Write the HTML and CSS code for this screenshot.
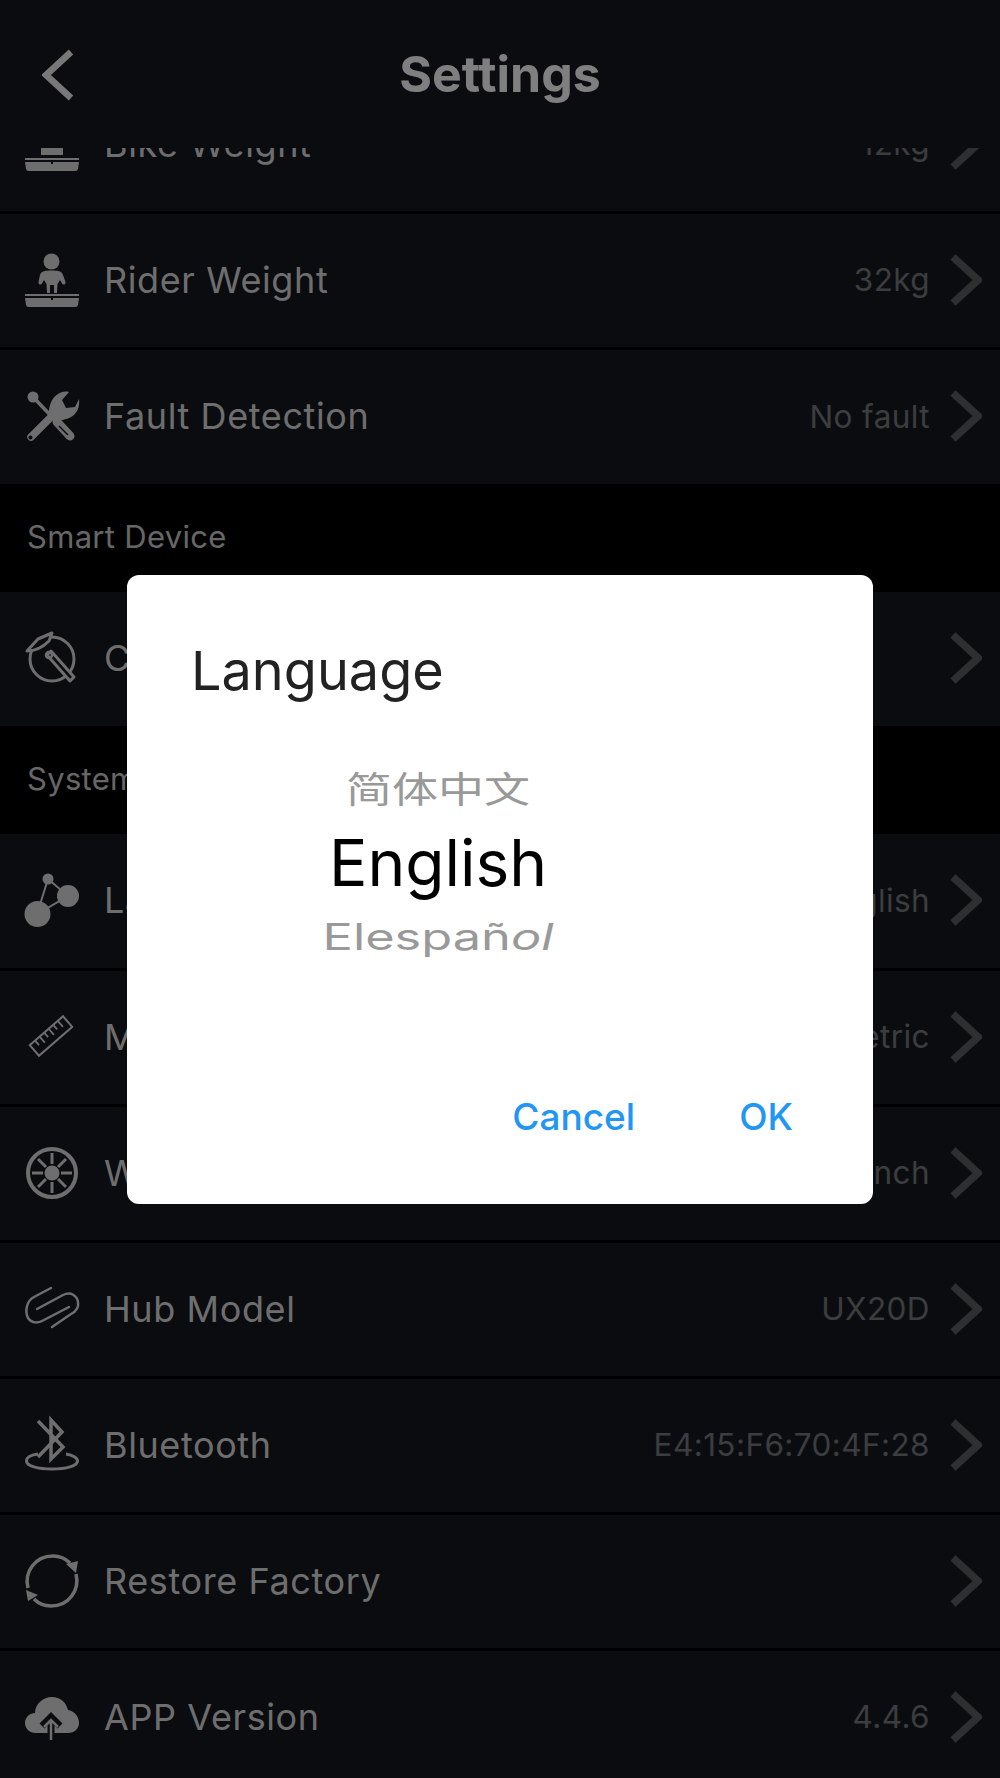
FILE: index.html
```html
<!DOCTYPE html>
<html lang="en">
<head>
  <meta charset="UTF-8">
  <meta name="viewport" content="width=device-width, initial-scale=1.0">
  <title>Settings</title>
  <link rel="stylesheet" href="styles.css">
</head>
<body>
  <div class="page">
    <header class="topbar">
      <svg class="back" viewBox="0 0 32 52"><path d="M29 3 L4 26 L29 49"/></svg>
      <h1>Settings</h1>
    </header>

    <div class="list">
      <div class="row">
        <svg class="ico" viewBox="0 0 54 54"><path class="fill" d="M16 20h22v18H16z"/><rect class="fill" x="0" y="41" width="54" height="2"/><path class="fill" d="M0 45h26v2h2v-2h26l-1 7q-.3 2-3 2H4q-2.700 0-3-2z"/></svg>
        <span class="label">Bike Weight</span>
        <span class="value">12kg</span>
        <svg class="arrow" viewBox="0 0 32 52"><path d="M3 3 L28 26 L3 49"/></svg>
      </div>
      <div class="row">
        <svg class="ico" viewBox="0 0 54 54"><circle class="fill" cx="26.500" cy="8.500" r="8"/><path class="fill" d="M15 22c1-4 6-4.500 11.500-4.500S37 18 38 22l2.500 7c.6 2.500-2.400 3.500-3.500 1.500L35 27l-2.500 4-.5 9h-3v-8h-4v8h-3l-.5-9L19 27l-2 3.500C15.900 32.500 12.900 31.500 13.500 29z"/><rect class="fill" x="0" y="41" width="54" height="2"/><path class="fill" d="M0 45h26v2h2v-2h26l-1 7q-.3 2-3 2H4q-2.700 0-3-2z"/></svg>
        <span class="label">Rider Weight</span>
        <span class="value">32kg</span>
        <svg class="arrow" viewBox="0 0 32 52"><path d="M3 3 L28 26 L3 49"/></svg>
      </div>
      <div class="row">
        <svg class="ico" viewBox="0 0 54 54"><path class="line" stroke-width="3.500" d="M9 9 L30 31"/><circle class="fill" cx="8" cy="8" r="5.500"/><path class="line" stroke-width="9" stroke-linecap="round" d="M32 33 L45 47"/><path class="gap" stroke-width="1.500" d="M34 37 L43 46"/><path class="line" stroke-width="7.500" stroke-linecap="round" d="M6 48 L28 26"/><path class="fill" d="M24 27 C23 19 26 9 33 5 C36 3 40 2 44 3 L37 11 L41 19 L50 18 L54 10 C55 18 52 25 46 28 C41 31 35 31 30 33z"/><circle class="gap" cx="5.500" cy="48.500" r="2"/></svg>
        <span class="label">Fault Detection</span>
        <span class="value">No fault</span>
        <svg class="arrow" viewBox="0 0 32 52"><path d="M3 3 L28 26 L3 49"/></svg>
      </div>

      <div class="section">Smart Device</div>
      <div class="row">
        <svg class="ico" viewBox="0 0 54 54"><circle class="line" stroke-width="3" cx="27" cy="28" r="22"/><path class="blank" stroke-width="3" stroke-linejoin="round" d="M2 20 L13 8 L27 2 L24 10 C18 16 10 20 2 20z"/><path class="blank" stroke-width="3" stroke-linejoin="round" d="M22 24 L26 20 L49 46 L45 50z"/><circle class="line" stroke-width="2.500" cx="24" cy="24" r="3"/></svg>
        <span class="label">CSC</span>
        <span class="value"></span>
        <svg class="arrow" viewBox="0 0 32 52"><path d="M3 3 L28 26 L3 49"/></svg>
      </div>

      <div class="section">System Setting</div>
      <div class="row">
        <svg class="ico" viewBox="0 0 54 54"><path class="line" stroke-width="2" d="M23 6 L12 41 L43 23z"/><circle class="fill" cx="12.500" cy="41" r="13"/><circle class="fill" cx="43" cy="23" r="11"/><circle class="fill" cx="23" cy="6" r="5.500"/></svg>
        <span class="label">Language</span>
        <span class="value">English</span>
        <svg class="arrow" viewBox="0 0 32 52"><path d="M3 3 L28 26 L3 49"/></svg>
      </div>
      <div class="row">
        <svg class="ico" viewBox="0 0 54 54"><g transform="rotate(-41 26 26)"><rect class="line" stroke-width="2" x="4" y="19" width="44" height="14"/><path class="line" stroke-width="1.800" d="M11 19v6M17 19v8M23 19v6M29 19v8M35 19v6M41 19v8"/></g></svg>
        <span class="label">Metric Unit</span>
        <span class="value">Metric</span>
        <svg class="arrow" viewBox="0 0 32 52"><path d="M3 3 L28 26 L3 49"/></svg>
      </div>
      <div class="row">
        <svg class="ico" viewBox="0 0 54 54"><circle class="line" stroke-width="4" cx="27" cy="27" r="24"/><circle class="fill" cx="27" cy="27" r="7.500"/><path class="line" stroke-width="3" d="M27 7v11M27 36v11M7 27h11M36 27h11M13 13l8 8M33 33l8 8M41 13l-8 8M21 33l-8 8"/></svg>
        <span class="label">Wheel Size</span>
        <span class="value">20 inch</span>
        <svg class="arrow" viewBox="0 0 32 52"><path d="M3 3 L28 26 L3 49"/></svg>
      </div>
      <div class="row">
        <svg class="ico" viewBox="0 0 54 54"><path class="line" stroke-width="2.500" stroke-linecap="round" d="M26 6 L9 15 C1 19 0 30 3 36 C7 42 14 41 19 38 L44 25"/><path class="line" stroke-width="2.500" stroke-linecap="round" d="M12 27 L38 13 C46 9 52 14 53 20 C54 26 50 30 46 32 L27 45"/></svg>
        <span class="label">Hub Model</span>
        <span class="value">UX20D</span>
        <svg class="arrow" viewBox="0 0 32 52"><path d="M3 3 L28 26 L3 49"/></svg>
      </div>
      <div class="row">
        <svg class="ico" viewBox="0 0 54 54"><path class="line" stroke-width="3" d="M13 36 C5 37 1.500 40 1.500 43 C1.500 48 13 51 27 51 C41 51 52.500 48 52.500 43 C52.500 40 48 37 41 36"/><path class="line" stroke-width="3.500" d="M13 3 L38 29 L26 41 V2 L37 14 L13 39"/></svg>
        <span class="label">Bluetooth</span>
        <span class="value">E4:15:F6:70:4F:28</span>
        <svg class="arrow" viewBox="0 0 32 52"><path d="M3 3 L28 26 L3 49"/></svg>
      </div>
      <div class="row">
        <svg class="ico" viewBox="0 0 54 54"><path class="line" stroke-width="3.500" d="M3 34 C-1 18 10 2 28 2 C35 2 41 5 45 9"/><path class="fill" d="M41 10 L53 7 L51 19z"/><path class="line" stroke-width="3.500" d="M51 20 C55 36 44 52 26 52 C19 52 13 49 9 45"/><path class="fill" d="M1 36 L13 41 L3 47z"/></svg>
        <span class="label">Restore Factory</span>
        <span class="value"></span>
        <svg class="arrow" viewBox="0 0 32 52"><path d="M3 3 L28 26 L3 49"/></svg>
      </div>
      <div class="row">
        <svg class="ico" viewBox="0 0 54 54"><path class="fill" d="M11 43 C4 43 0 38 0 33 C0 27 5 23 10 23 C10 14 18 7 27 7 C35 7 41 12 43 20 C49 21 54 26 54 33 C54 39 49 43 43 43z"/><path class="halo" stroke-width="7" d="M26 50 V28 M17 36 L26 27 L35 36"/><path class="line" stroke-width="2.500" d="M26 50 V30 M19 37 L26 30 L33 37"/></svg>
        <span class="label">APP Version</span>
        <span class="value">4.4.6</span>
        <svg class="arrow" viewBox="0 0 32 52"><path d="M3 3 L28 26 L3 49"/></svg>
      </div>
    </div>
  </div>

  <!-- Language picker -->
  <div class="overlay">
    <div class="dialog">
      <h2>Language</h2>
      <div class="wheel">
        <div class="opt opt-top">简体中文</div>
        <div class="opt opt-mid">English</div>
        <div class="opt opt-low">Elespañ<i>ol</i></div>
      </div>
      <div class="actions">
        <span class="btn">Cancel</span>
        <span class="btn">OK</span>
      </div>
    </div>
  </div>
</body>
</html>
```

FILE: styles.css
```css
html, body {
  margin: 0;
  height: 100%;
  overflow: hidden;
}

body {
  font-family: Inter, "Noto Sans CJK SC", sans-serif;
  background-color: #000;
}

.page {
  display: flex;
  flex-direction: column;
  height: 100%;
  overflow: hidden;
}

/* Top bar */
.topbar {
  position: relative;
  z-index: 2;
  flex: none;
  height: 148px;
  display: flex;
  align-items: center;
  justify-content: center;
  background-color: #161920;
}

.topbar h1 {
  margin: 0;
  font-size: 50px;
  font-weight: 700;
  color: #fff;
}

.back {
  position: absolute;
  left: 42px;
  top: 49px;
  width: 32px;
  height: 52px;
  fill: none;
  stroke: #f0f0f0;
  stroke-width: 6.500;
}

/* Rows */
.list {
  flex: none;
  margin-top: -70px;
}

.row {
  box-sizing: border-box;
  height: 136px;
  display: flex;
  align-items: center;
  padding: 0 18px 2px 25px;
  background-color: #161920;
  border-bottom: 3px solid #000;
}

.section + .row {
  height: 137px;
}

.row:has(+ .section) {
  height: 134px;
  border-bottom: 0;
}

.ico {
  flex: none;
  width: 54px;
  height: 54px;
  margin-right: 25px;
  overflow: visible;
}

.ico .fill {
  fill: #dcdcdc;
}

.ico .line {
  fill: none;
  stroke: #dcdcdc;
}

.ico .blank {
  fill: #161920;
  stroke: #dcdcdc;
}

.ico .gap {
  fill: none;
  stroke: #161920;
}

.ico circle.gap {
  fill: #161920;
  stroke: none;
}

.ico .halo {
  fill: none;
  stroke: #161920;
}

.label {
  font-size: 36px;
  letter-spacing: 0.6px;
  color: #dcdcdc;
}

.value {
  margin-left: auto;
  margin-right: 20px;
  font-size: 31.500px;
  letter-spacing: 0.4px;
  color: #777a7e;
}

.arrow {
  flex: none;
  width: 32px;
  height: 52px;
  fill: none;
  stroke: #5c5e62;
  stroke-width: 7.500;
}

.section {
  box-sizing: border-box;
  height: 108px;
  display: flex;
  align-items: center;
  padding: 0 27px 4px;
  font-size: 31px;
  letter-spacing: 0.3px;
  color: #cfcfcf;
  background-color: #000;
}

/* Dialog */
.overlay {
  position: fixed;
  top: 0;
  left: 0;
  width: 100%;
  height: 100%;
  z-index: 5;
  display: flex;
  align-items: center;
  justify-content: center;
  background: rgba(0, 0, 0, 0.5);
}

.dialog {
  box-sizing: border-box;
  width: 746px;
  height: 629px;
  padding: 66px 0 0 64px;
  display: flex;
  flex-direction: column;
  background: #fff;
  border-radius: 12px;
}

.dialog h2 {
  margin: 0;
  font-size: 54px;
  line-height: 60px;
  font-weight: 400;
  color: #222;
}

.wheel {
  width: 494px;
  margin-top: 58px;
  text-align: center;
}

.opt {
  white-space: nowrap;
}

.opt-top {
  height: 60px;
  line-height: 60px;
  font-size: 46px;
  color: #999;
  transform: scaleY(0.8);
}

.opt-mid {
  height: 88px;
  line-height: 88px;
  font-size: 64px;
  color: #000;
}

.opt-low {
  height: 60px;
  line-height: 60px;
  font-size: 50.500px;
  color: #999;
  transform: scaleY(0.72);
}

.actions {
  display: flex;
  justify-content: flex-end;
  gap: 104px;
  margin-top: auto;
  padding: 0 80px 65px 0;
}

.btn {
  font-size: 37px;
  font-weight: 500;
  line-height: 44px;
  color: #2196f3;
}
```
